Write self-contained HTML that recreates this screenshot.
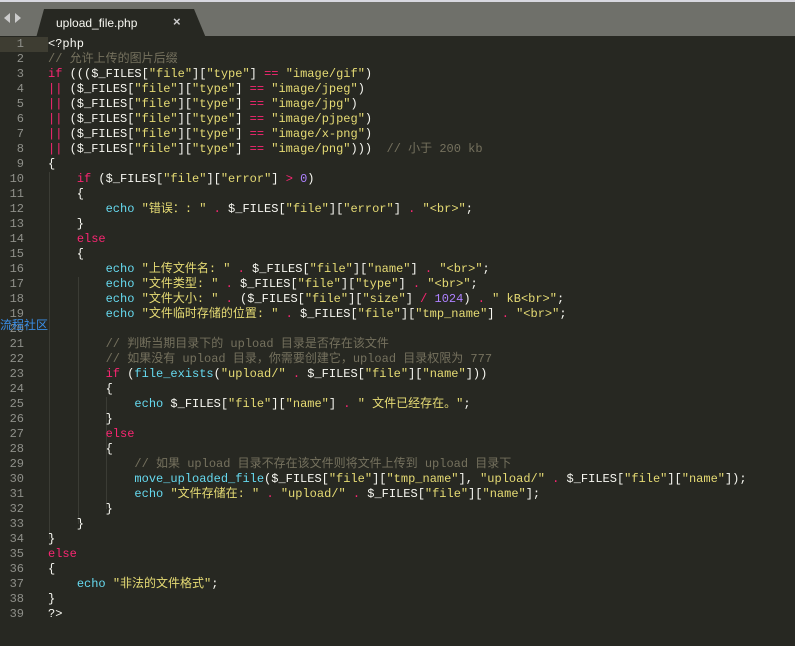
<!DOCTYPE html>
<html><head><meta charset="utf-8"><style>
body{margin:0;width:795px;height:646px;overflow:hidden;background:#272822;font-family:"Liberation Mono","Noto Sans CJK SC",monospace;}
#tabbar{position:absolute;left:0;top:0;width:795px;height:36px;background:#6f706a;border-top:2px solid #d8d8e0;box-sizing:border-box}
#tab{position:absolute;left:36px;top:7px;width:170px;height:29px;background:#272822;clip-path:polygon(8px 0,158px 0,170px 29px,0 29px,0 29px);}
#tab span{position:absolute;left:20px;top:7px;color:#f8f8f2;font:12px "Liberation Sans",sans-serif}
#tab b{position:absolute;left:137px;top:5px;color:#ccc;font:bold 13px "Liberation Sans",sans-serif}
.arr{position:absolute;top:11px;width:0;height:0;border-top:5px solid transparent;border-bottom:5px solid transparent}
#gut{position:absolute;left:0;top:37px;width:24px;text-align:right;color:#8f908a;font-size:12px;line-height:15px}
#cur{position:absolute;left:0;top:37px;width:48px;height:15px;background:#3e3d32}
#code{position:absolute;left:48px;top:37px;color:#f8f8f2;font-size:12px;line-height:15px;white-space:pre}
.k{color:#f92672}.s{color:#e6db74}.f{color:#66d9ef}.n{color:#ae81ff}.c{color:#75715e}
.g{position:absolute;width:1px;background:#3b3c35}
#wm{position:absolute;left:0;top:316px;color:#3a8ee6;font:12px "Noto Sans CJK SC",sans-serif}
</style></head><body>
<div id="tabbar"><div class="arr" style="left:4px;border-right:6px solid #ccc"></div><div class="arr" style="left:15px;border-left:6px solid #ccc"></div>
<div id="tab"><span>upload_file.php</span><b>×</b></div></div>
<div id="cur"></div>
<div class="g" style="left:49px;top:172px;height:367px"></div>
<div class="g" style="left:78px;top:277px;height:247px"></div>
<div class="g" style="left:106px;top:397px;height:112px"></div>
<div id="gut">1<br>2<br>3<br>4<br>5<br>6<br>7<br>8<br>9<br>10<br>11<br>12<br>13<br>14<br>15<br>16<br>17<br>18<br>19<br>20<br>21<br>22<br>23<br>24<br>25<br>26<br>27<br>28<br>29<br>30<br>31<br>32<br>33<br>34<br>35<br>36<br>37<br>38<br>39</div>
<div id="code">&lt;?php
<span class="c">// 允许上传的图片后缀</span>
<span class="k">if</span> ((($_FILES[<span class="s">"file"</span>][<span class="s">"type"</span>] <span class="k">==</span> <span class="s">"image/gif"</span>)
<span class="k">||</span> ($_FILES[<span class="s">"file"</span>][<span class="s">"type"</span>] <span class="k">==</span> <span class="s">"image/jpeg"</span>)
<span class="k">||</span> ($_FILES[<span class="s">"file"</span>][<span class="s">"type"</span>] <span class="k">==</span> <span class="s">"image/jpg"</span>)
<span class="k">||</span> ($_FILES[<span class="s">"file"</span>][<span class="s">"type"</span>] <span class="k">==</span> <span class="s">"image/pjpeg"</span>)
<span class="k">||</span> ($_FILES[<span class="s">"file"</span>][<span class="s">"type"</span>] <span class="k">==</span> <span class="s">"image/x-png"</span>)
<span class="k">||</span> ($_FILES[<span class="s">"file"</span>][<span class="s">"type"</span>] <span class="k">==</span> <span class="s">"image/png"</span>)))  <span class="c">// 小于 200 kb</span>
{
    <span class="k">if</span> ($_FILES[<span class="s">"file"</span>][<span class="s">"error"</span>] <span class="k">&gt;</span> <span class="n">0</span>)
    {
        <span class="f">echo</span> <span class="s">"错误：: "</span> <span class="k">.</span> $_FILES[<span class="s">"file"</span>][<span class="s">"error"</span>] <span class="k">.</span> <span class="s">"&lt;br&gt;"</span>;
    }
    <span class="k">else</span>
    {
        <span class="f">echo</span> <span class="s">"上传文件名: "</span> <span class="k">.</span> $_FILES[<span class="s">"file"</span>][<span class="s">"name"</span>] <span class="k">.</span> <span class="s">"&lt;br&gt;"</span>;
        <span class="f">echo</span> <span class="s">"文件类型: "</span> <span class="k">.</span> $_FILES[<span class="s">"file"</span>][<span class="s">"type"</span>] <span class="k">.</span> <span class="s">"&lt;br&gt;"</span>;
        <span class="f">echo</span> <span class="s">"文件大小: "</span> <span class="k">.</span> ($_FILES[<span class="s">"file"</span>][<span class="s">"size"</span>] <span class="k">/</span> <span class="n">1024</span>) <span class="k">.</span> <span class="s">" kB&lt;br&gt;"</span>;
        <span class="f">echo</span> <span class="s">"文件临时存储的位置: "</span> <span class="k">.</span> $_FILES[<span class="s">"file"</span>][<span class="s">"tmp_name"</span>] <span class="k">.</span> <span class="s">"&lt;br&gt;"</span>;

        <span class="c">// 判断当期目录下的 upload 目录是否存在该文件</span>
        <span class="c">// 如果没有 upload 目录，你需要创建它，upload 目录权限为 777</span>
        <span class="k">if</span> (<span class="f">file_exists</span>(<span class="s">"upload/"</span> <span class="k">.</span> $_FILES[<span class="s">"file"</span>][<span class="s">"name"</span>]))
        {
            <span class="f">echo</span> $_FILES[<span class="s">"file"</span>][<span class="s">"name"</span>] <span class="k">.</span> <span class="s">" 文件已经存在。"</span>;
        }
        <span class="k">else</span>
        {
            <span class="c">// 如果 upload 目录不存在该文件则将文件上传到 upload 目录下</span>
            <span class="f">move_uploaded_file</span>($_FILES[<span class="s">"file"</span>][<span class="s">"tmp_name"</span>], <span class="s">"upload/"</span> <span class="k">.</span> $_FILES[<span class="s">"file"</span>][<span class="s">"name"</span>]);
            <span class="f">echo</span> <span class="s">"文件存储在: "</span> <span class="k">.</span> <span class="s">"upload/"</span> <span class="k">.</span> $_FILES[<span class="s">"file"</span>][<span class="s">"name"</span>];
        }
    }
}
<span class="k">else</span>
{
    <span class="f">echo</span> <span class="s">"非法的文件格式"</span>;
}
?&gt;</div>
<div id="wm">流程社区</div>
</body></html>
